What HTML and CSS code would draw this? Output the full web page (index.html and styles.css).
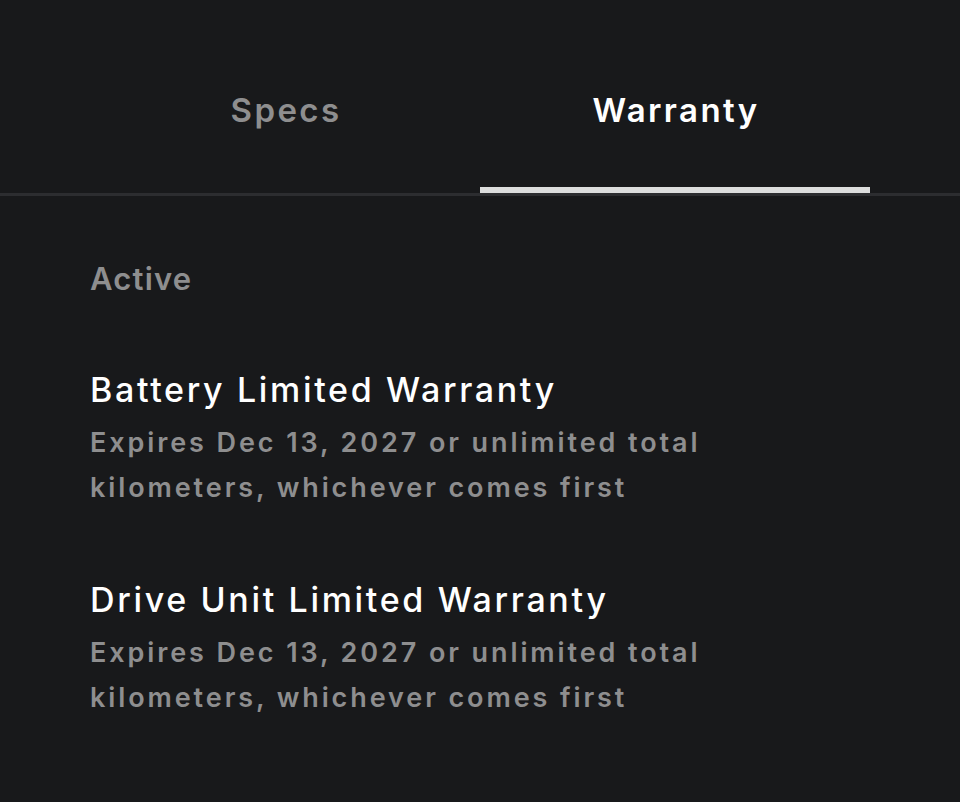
FILE: index.html
```html
<!DOCTYPE html>
<html lang="en">
<head>
<meta charset="utf-8">
<link rel="stylesheet" href="styles.css">
</head>
<body>
<div class="tabs">
  <div class="tab">Specs</div>
  <div class="tab active">Warranty</div>
</div>
<div class="content">
  <div class="section-label">Active</div>
  <div class="item">
    <div class="item-title">Battery Limited Warranty</div>
    <div class="item-desc">Expires Dec 13, 2027 or unlimited total kilometers, whichever comes first</div>
  </div>
  <div class="item">
    <div class="item-title">Drive Unit Limited Warranty</div>
    <div class="item-desc">Expires Dec 13, 2027 or unlimited total kilometers, whichever comes first</div>
  </div>
</div>
</body>
</html>
```
FILE: styles.css
```css
html, body {
  margin: 0;
  padding: 0;
  background: #18191b;
  min-height: 100%;
}
body {
  font-family: Inter, "Noto Sans", sans-serif;
  color: #ffffff;
}
.tabs {
  display: grid;
  grid-template-columns: 390px 390px;
  padding: 0 90px;
  border-bottom: 3px solid #2c2d30;
}
.tab {
  box-sizing: border-box;
  height: 193px;
  padding: 85px 0 0 2px;
  border-bottom: 6px solid transparent;
  text-align: center;
  font-size: 33px;
  line-height: 50px;
  font-weight: 600;
  letter-spacing: 2.4px;
  color: #8e8e8f;
}
.tab.active {
  color: #ffffff;
  border-bottom-color: #dcdddd;
}
.content {
  padding: 63px 90px 0;
}
.section-label {
  font-size: 31px;
  font-weight: 600;
  letter-spacing: 1.2px;
  color: #8e8e8f;
  line-height: 40px;
}
.item {
  margin-top: 66px;
}
.item + .item {
  margin-top: 65px;
}
.item-title {
  font-size: 34px;
  font-weight: 500;
  letter-spacing: 2.65px;
  line-height: 50px;
}
.item-desc {
  margin-top: 5px;
  max-width: 650px;
  font-size: 27px;
  font-weight: 600;
  letter-spacing: 2.9px;
  color: #8e8e8f;
  line-height: 45px;
}
```
